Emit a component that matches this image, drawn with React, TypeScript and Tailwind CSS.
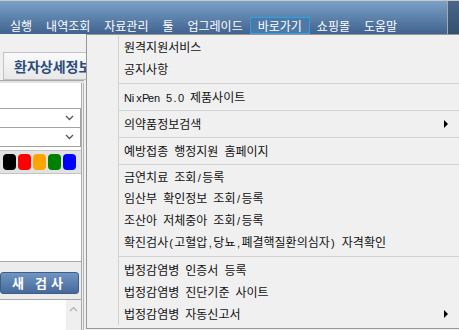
const font = "font-['Noto_Sans_CJK_KR',sans-serif]";

const navItems = ["실행", "내역조회", "자료관리", "툴", "업그레이드", "바로가기", "쇼핑몰", "도움말"];

type MenuEntry =
  | { kind: "item"; label: string; h: number; sub?: boolean }
  | { kind: "sep"; h: number };

const menuEntries: MenuEntry[] = [
  { kind: "item", label: "원격지원서비스", h: 22 },
  { kind: "item", label: "공지사항", h: 22 },
  { kind: "sep", h: 6 },
  { kind: "item", label: "NixPen 5.0 제품사이트", h: 22 },
  { kind: "sep", h: 5 },
  { kind: "item", label: "의약품정보검색", h: 22, sub: true },
  { kind: "sep", h: 5 },
  { kind: "item", label: "예방접종 행정지원 홈페이지", h: 22 },
  { kind: "sep", h: 5 },
  { kind: "item", label: "금연치료 조회/등록", h: 21 },
  { kind: "item", label: "임산부 확인정보 조회/등록", h: 21 },
  { kind: "item", label: "조산아 저체중아 조회/등록", h: 22 },
  { kind: "item", label: "확진검사(고혈압,당뇨,폐결핵질환의심자) 자격확인", h: 22 },
  { kind: "sep", h: 6 },
  { kind: "item", label: "법정감염병 인증서 등록", h: 22 },
  { kind: "item", label: "법정감염병 진단기준 사이트", h: 22 },
  { kind: "item", label: "법정감염병 자동신고서", h: 22, sub: true },
];

const swatches = ["bg-black", "bg-[#ff0000]", "bg-[#ffa500]", "bg-[#008000]", "bg-[#0000ff]"];

// half-width latin like the old gulim menus: every ascii char gets a 6px cell
const MenuLabel = ({ text }: { text: string }) => (
  <span className="leading-none whitespace-pre">
    {Array.from(text).map((ch, i) =>
      ch.charCodeAt(0) < 128 ? (
        <span key={i} className="inline-block w-[6px] text-center font-['Liberation_Sans',sans-serif] text-[11px]">
          {ch === " " ? "\u00a0" : ch}
        </span>
      ) : (
        <span key={i}>{ch}</span>
      )
    )}
  </span>
);

const Chevron = () => (
  <svg width="9" height="6" viewBox="0 0 9 6" className="mr-[6px]">
    <path d="M1 1 L4.5 4.5 L8 1" stroke="#555" strokeWidth="1.3" fill="none" />
  </svg>
);

const TopBar = () => (
  <div className="flex h-[34px] border-t border-[#c8c8c8] bg-linear-to-b from-[#7ba1c7] to-[#40638f]">
    <div className="flex flex-1 items-end pl-[3px]">
      {navItems.map((n) => (
        <div
          key={n}
          className={`flex h-[17px] items-center px-[7px] text-[12px] leading-none text-white ${
            n === "바로가기" ? "border border-[#2fa0e0] bg-[#4d79a6] px-[6px]" : ""
          }`}
        >
          {n}
        </div>
      ))}
    </div>
    <div className="w-[12px] border-l border-[#a9a9a9] bg-linear-to-b from-[#4a6688] to-[#34506f]" />
  </div>
);

const LeftPanel = () => (
  <div className="flex w-[84px] flex-col">
    <div className="h-[18px]" />
    <div className="ml-[3px] flex h-[28px] w-[140px] items-center border border-[#c2c2c2] bg-linear-to-b from-[#fafafa] to-[#e8e8e8] pl-[10px] text-[14px] font-bold text-[#2c4c7d]">
      환자상세정보
    </div>
    <div className="h-[3px] border-t border-[#a8a8a8] bg-[#e4e4e4]" />
    <div className="flex flex-1 border-r border-[#b4b4b4]">
      <div className="flex w-[82px] flex-col border-r border-[#a8a8a8] bg-[#ececec]">
        <div className="flex h-[179px] flex-col border-b border-[#a8a8a8] bg-white pt-[25px]">
          <div className="flex h-[20px] items-center justify-end border border-l-0 border-[#a4a4a4]">
            <Chevron />
          </div>
          <div className="flex h-[19px] items-center justify-end border-b border-r border-[#a4a4a4]">
            <Chevron />
          </div>
          <div className="mt-[3px] flex h-[24px] items-center gap-[2px] border-y border-[#c4c4c4] bg-[#e2e2e2] pl-[3px]">
            {swatches.map((c) => (
              <div key={c} className={`h-[16px] w-[13px] rounded-[4px] ${c}`} />
            ))}
          </div>
        </div>
        <div className="flex h-[38px] flex-col border-b border-[#a8a8a8] pt-[10px]">
          <div className="flex h-[22px] w-[79px] items-center justify-center rounded-[3px] border border-[#3f5e86] bg-linear-to-b from-[#7196c2] to-[#46699a] text-[13px] font-bold tracking-[4px] text-white">
            새 검사
          </div>
        </div>
        <div className="flex flex-1 bg-white">
          <div className="flex-1" />
          <div className="flex w-[15px] justify-center bg-[#efefef] pt-[6px]">
            <svg width="9" height="6" viewBox="0 0 9 6">
              <path d="M1 5 L4.5 1.5 L8 5" stroke="#b0b0b0" strokeWidth="1.2" fill="none" />
            </svg>
          </div>
        </div>
      </div>
    </div>
  </div>
);

const DropMenu = () => (
  <div className="absolute left-[86px] top-[34px] h-[295px] w-[378px] border border-[#979797] bg-[#f0f0f0] pb-[3px] pt-[1px]">
    <div className="ml-[31px] mr-[4px] border-l border-[#d2d2d2] text-[12px] text-[#111]">
      {menuEntries.map((e, i) =>
        e.kind === "sep" ? (
          <div key={i} className="flex items-center" style={{ height: e.h }}>
            <div className="h-px w-full bg-[#d2d2d2]" />
          </div>
        ) : (
          <div key={i} className="flex items-center justify-between pl-[5px] pr-[11px]" style={{ height: e.h }}>
            <MenuLabel text={e.label} />
            {e.sub && <span className="h-0 w-0 border-y-[4px] border-l-[4px] border-y-transparent border-l-black" />}
          </div>
        )
      )}
    </div>
  </div>
);

export default function App() {
  return (
    <div className={`relative h-[330px] w-[459px] overflow-hidden bg-[#f0f0f0] ${font}`}>
      <TopBar />
      <div className="flex h-[296px]">
        <LeftPanel />
        <div className="flex-1" />
      </div>
      <DropMenu />
    </div>
  );
}
